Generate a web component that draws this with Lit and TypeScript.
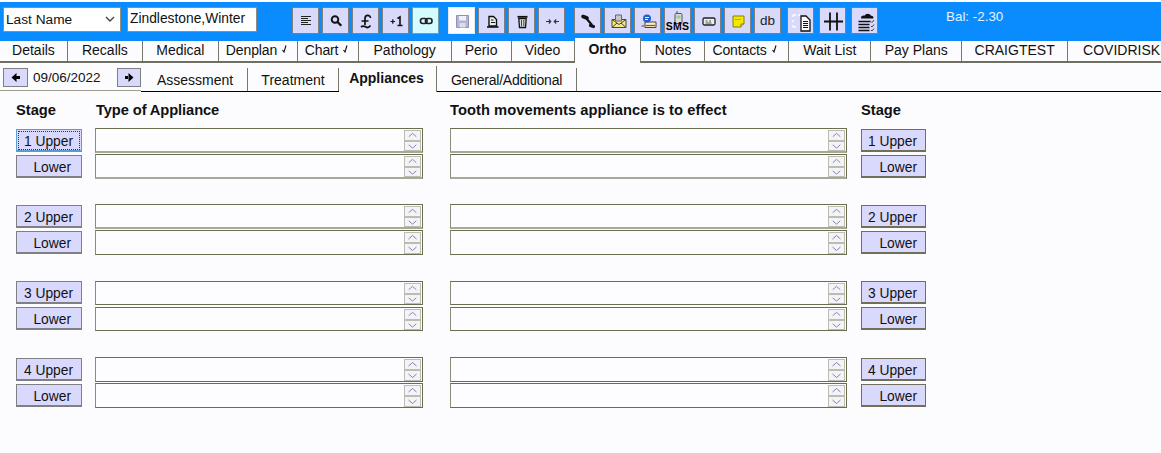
import { LitElement, html, css, svg } from "lit";
import { customElement } from "lit/decorators.js";

const K = "#111";
const icons: Record<string, unknown> = {
  lines: svg`<path d="M8 8.500h10M8 10.500h7M8 12.500h10M8 14.500h7M8 16.500h10" stroke="#222" stroke-width="1" fill="none"/>`,
  search: svg`<circle cx="12" cy="11.500" r="3.300" fill="none" stroke="${K}" stroke-width="1.900"/><path d="M14.500 14l3.800 3.800" stroke="${K}" stroke-width="2.300"/>`,
  pound: svg`<path d="M17.500 10c0-3.500-5.500-3.500-5.500.5v6.500M8.500 13h7M8 19c2-1.800 3.500-1 5 0s3 .5 4.500-1.500" fill="none" stroke="${K}" stroke-width="1.700"/>`,
  plus1: svg`<path d="M7.500 13.500h4.500M9.800 11.300v4.500" stroke="${K}" stroke-width="1.200"/><path d="M14.500 10.500l2.500-1.500v8.500M14.500 17.500h5" fill="none" stroke="${K}" stroke-width="1.600"/>`,
  link: svg`<rect x="7.500" y="10.500" width="6.500" height="5" rx="2.200" fill="none" stroke="#222" stroke-width="1.700"/><rect x="12.500" y="10.500" width="6.500" height="5" rx="2.200" fill="none" stroke="#222" stroke-width="1.700"/>`,
  save: svg`<path d="M7.500 7.500h12v12h-12z" fill="#b4b4d4" stroke="#9090b0"/><rect x="10" y="8" width="7" height="4.500" fill="#f0f0f8"/><rect x="10.500" y="15" width="6" height="4.500" fill="#dcdcec"/>`,
  doc: svg`<path d="M10 8.500h4.500l3 3v6.500h-7.500z" fill="#eee" stroke="${K}" stroke-width="1.400"/><path d="M8 19h11.500" stroke="${K}" stroke-width="1.600"/><path d="M12 12h2.500M12 14.500h4" stroke="${K}"/>`,
  bin: svg`<path d="M9.800 10.500l.7 9h6l.7-9z" fill="#ddd" stroke="${K}" stroke-width="1.300"/><path d="M8.500 8.800h10" stroke="${K}" stroke-width="1.800"/><path d="M12.500 12v6M14.800 12v6" stroke="#444"/>`,
  merge: svg`<path d="M7 13.500h4.500M9.800 11.500l2 2-2 2M20 13.500h-4.500M17.200 11.500l-2 2 2 2" fill="none" stroke="#333" stroke-width="1.100"/>`,
  phone: svg`<path d="M8 8.500l4 1.500" stroke="${K}" stroke-width="3.600" stroke-linecap="round"/><path d="M11 10l6 7" stroke="${K}" stroke-width="2.200"/><path d="M15.500 17.500l3 1" stroke="${K}" stroke-width="3.200" stroke-linecap="round"/>`,
  mail: svg`<path d="M7 11.500h14v8h-14z" fill="#f4ea80" stroke="#444"/><path d="M7 11.500l7 5 7-5M7 19.500l5-4.500M21 19.500l-5-4.500" fill="none" stroke="#444"/><path d="M10.500 7h6v6h-6z" fill="#c8c8c8" stroke="#666"/>`,
  email: svg`<path d="M10 14h11v5.500h-11z" fill="#f4f0c0" stroke="#444"/><path d="M11 17.500h9" stroke="#c33" stroke-width="1.200"/><circle cx="12" cy="10.500" r="4" fill="#1f5fd0"/><path d="M10 9.500h4M10 11.500h3" stroke="#cfe"/><path d="M6.500 18h3" stroke="#444"/>`,
  sms: svg`<rect x="10" y="5.500" width="7" height="10" rx="1" fill="#ddd" stroke="#555"/><rect x="11.500" y="7.500" width="4" height="3" fill="#9c9"/><path d="M12 3v2.500" stroke="#555"/>`,
  card: svg`<rect x="8" y="10" width="12" height="7" rx="1.500" fill="#eee" stroke="#222" stroke-width="1.300"/><path d="M10.500 13h2M14 13h2M10.500 15h6" stroke="#444" stroke-width=".9"/>`,
  note: svg`<path d="M8 8h11v8l-3 3h-8z" fill="#f2e800" stroke="#8a8000"/><path d="M16 19v-3h3" fill="#d8d8a0" stroke="#8a8000"/><path d="M10 11.500h6" stroke="#b8a800"/>`,
  notes: svg`<path d="M5 7h3M5 7v2M10 7h2M5 12v2M5 17v2M5 19h3" stroke="#fff" stroke-width="1.300" fill="none"/><path d="M13 8h5l4 4v11h-9z" fill="#fff" stroke="${K}" stroke-width="1.300"/><path d="M15 13.500h5M15 15.500h5M15 17.500h5M15 19.500h5" stroke="${K}"/>`,
  hash: svg`<path d="M4 13.500h19M10 4.500v18M17 4.500v18" stroke="${K}" stroke-width="1.800" fill="none"/>`,
  cloud: svg`<path d="M9 10c0-2.500 2.500-2.800 3.500-2.300 1-2.700 5.500-2.700 6.500 0 2.500 0 3 2.300 2 2.800h-12z" fill="${K}"/><path d="M6.500 13.500h12M6.500 16.500h11M6.500 19.500h11M6.500 22.500h11" stroke="${K}" stroke-width="1.400"/><path d="M19 13.500l1 1 2-2.500M19 18l1 1 2-2.500M19 22l1 1 2-2.500" stroke="#333" fill="none" stroke-width=".9"/>`,
};

const tools = [
  [["lines"], ["search"], ["pound"], ["plus1"], ["link", "cyan"]],
  [["save", "white"], ["doc"], ["bin"], ["merge"]],
  [["phone"], ["mail"], ["email"], ["sms"], ["card"], ["note"], ["db"]],
  [["notes"], ["hash"], ["cloud"]],
];

const tabs: [string, number, boolean?][] = [
  ["Details", 68], ["Recalls", 75], ["Medical", 76], ["Denplan", 79, true], ["Chart", 61, true],
  ["Pathology", 93], ["Perio", 60], ["Video", 63], ["Ortho", 67], ["Notes", 64],
  ["Contacts", 84, true], ["Wait List", 82], ["Pay Plans", 91], ["CRAIGTEST", 106], ["COVIDRISK", 93],
];
const subtabs: [string, number][] = [["Assessment", 107], ["Treatment", 91], ["Appliances", 98], ["General/Additional", 140]];

@customElement("app-root")
export class AppRoot extends LitElement {
  static styles = css`
    :host { display: block; width: 1161px; height: 453px; overflow: hidden; background: #fcfcff; font: 14px "Liberation Sans", Arial, sans-serif; color: #111; }
    .wrap { background: #fff; height: 2px; }
    .top { height: 39px; background: #0a8cff; display: flex; align-items: flex-start; padding: 5px 0 0 3px; box-sizing: border-box; position: relative; }
    .select { width: 118px; height: 25px; box-sizing: border-box; background: #fff; border: 1px solid #8f8f7f; display: flex; align-items: center; justify-content: space-between; padding: 0 5px 0 2px; font-size: 13.700px; }
    .name { width: 130px; height: 25px; box-sizing: border-box; background: #fff; border: 1px solid #8f8f7f; margin-left: 6px; padding: 0 2px 3px 2px; display: flex; align-items: center; font-size: 13.800px; }
    .groups { display: flex; margin-left: 35px; }
    .group { display: flex; gap: 3px; }
    .group + .group { margin-left: 9px; }
    .group:nth-child(4) { margin-left: 6px; gap: 5px; }
    .tool { width: 27px; height: 27px; box-sizing: border-box; background: #d9d9fb; border: 1px solid #7f7f7f; display: flex; align-items: center; justify-content: center; position: relative; color: #222; }
    .tool.cyan { background: #d4fbff; border-color: #6f9fa8; }
    .tool.white { background: #fcfcff; border-color: #e8e8e8; }
    .tool svg { position: absolute; left: 0; top: 0; width: 27px; height: 27px; }
    .dbl { font-size: 13.500px; }
    .smslabel { position: absolute; left: 0; right: 0; bottom: 2px; text-align: center; font: bold 10.500px "Liberation Sans", sans-serif; letter-spacing: .3px; color: #000; line-height: 10px; }
    .bal { position: absolute; left: 946px; top: 7px; color: #e4f2ff; font-size: 13.400px; }
    .tabs { display: flex; height: 20px; border-bottom: 2px solid #6f6f63; background: #fcfcff; }
    .tab { box-sizing: border-box; height: 20px; border-right: 1px solid #77776a; display: flex; align-items: center; justify-content: center; padding-bottom: 2px; white-space: nowrap; }
    .tab:last-child { border-right: 0; padding-left: 15px; justify-content: flex-start; }
    .tab.chk { justify-content: flex-start; padding-left: 7px; letter-spacing: -.12px; }
    .tab .c { width: 8px; height: 8px; margin-left: 4px; margin-bottom: 2px; }
    .tab.on { font-weight: bold; height: 25px; margin-top: -3px; background: #fcfcff; position: relative; padding-bottom: 3px; }
    .sub { display: flex; height: 29px; align-items: flex-start; }
    .nav { width: 141px; height: 28px; box-sizing: border-box; display: flex; align-items: center; padding: 5px 0 4px 3px; border-bottom: 1px solid #9c9c90; }
    .arrow { width: 25px; height: 19px; box-sizing: border-box; background: #d9d9fb; border: 1px solid #7f7f7f; display: flex; align-items: center; justify-content: center; }
    .arrow.next { width: 24px; }
    .arrow svg { width: 11px; height: 11px; }
    .date { width: 89px; padding-left: 5px; box-sizing: border-box; font-size: 13.500px; }
    .stabs { display: flex; flex: 1; height: 29px; border-bottom: 1px solid #000; box-sizing: border-box; }
    .st { box-sizing: border-box; height: 23px; margin-top: 5px; display: flex; align-items: center; justify-content: center; border-right: 1px solid #77776a; }
    .st:first-child { padding-left: 2px; }
    .st.tight { letter-spacing: -.22px; }
    .st.on { font-weight: bold; height: 26px; margin-top: 3px; background: #fcfcff; padding: 0 2px 3px 0; position: relative; z-index: 1; }
    .form { padding: 9px 0 0 16px; }
    .heads { display: grid; grid-template-columns: 80px 354px 411px 65px; height: 18px; align-items: center; font-weight: bold; font-size: 14.700px; margin-bottom: 9px; }
    .heads .type { letter-spacing: -.1px; }
    .heads .move { letter-spacing: .05px; }
    .row { display: grid; grid-template-columns: 79px 355px 411px 65px; height: 26px; align-items: start; }
    .row.gap { margin-top: 24px; }
    .row.gap.n0 { margin-top: 0; }
    .row.gap.n3 { margin-top: 25px; }
    .btn { width: 66px; height: 23px; margin-top: 1px; box-sizing: border-box; background: #d9d9fd; border: 1px solid #7f7f84; border-bottom-width: 2px; text-align: right; padding: 0 8px 0 0; line-height: 23px; font-size: 13.800px; }
    .btn.low { padding-right: 10px; }
    .btn.r { width: 65px; border-color: #6f6f5c; padding-right: 8px; }
    .btn.focus { border-color: #5b9bd5; outline: 1px dotted #333; outline-offset: -3px; }
    .memo { height: 25px; box-sizing: border-box; border: 1px solid #6c6c50; border-left-color: #8c8c78; background: #fdfdff; display: flex; justify-content: flex-end; padding: 1px 1px 0 0; }
    .n0 .memo, .n1.gap .memo { border-bottom: 2px solid #a8a898; }
    .n2 .memo { margin-top: 1px; height: 24px; }
    .memo.a { width: 328px; }
    .memo.b { width: 397px; }
    .spin { width: 17px; display: flex; flex-direction: column; }
    .spin svg { display: block; width: 17px; height: 11px; box-sizing: border-box; border: 1px solid #bcbcb0; background: #f4f4f8; }
  `;

  tool(t: string[]) {
    const [name, cls] = t;
    const body = name === "db"
      ? html`<span class="dbl">db</span>`
      : html`<svg viewBox="0 0 27 27">${icons[name]}</svg>${name === "sms" ? html`<span class="smslabel">SMS</span>` : ""}`;
    return html`<div class="tool ${cls ?? ""}">${body}</div>`;
  }

  row(label: string, n: number, first: boolean) {
    const spin = html`<div class="spin">
      <svg viewBox="0 0 15 9"><path d="M3.500 6l4-3.500 4 3.500" fill="none" stroke="#8080a8"/></svg>
      <svg viewBox="0 0 15 9"><path d="M3.500 3l4 3.500 4-3.500" fill="none" stroke="#8080a8"/></svg>
    </div>`;
    return html`<div class="row ${first ? "gap" : ""} n${n}">
      <div class="btn ${first ? "" : "low"} ${first && n === 0 ? "focus" : ""}">${label}</div>
      <div class="memo a">${spin}</div>
      <div class="memo b">${spin}</div>
      <div class="btn r">${label}</div>
    </div>`;
  }

  render() {
    return html`
      <div class="wrap"></div>
      <div class="top">
        <div class="select">Last Name
          <svg width="10" height="7" viewBox="0 0 10 7"><path d="M1 1l4 4 4-4" fill="none" stroke="#444" stroke-width="1.400"/></svg>
        </div>
        <div class="name">Zindlestone,Winter</div>
        <div class="groups">
          ${tools.map((g) => html`<div class="group">${g.map((t) => this.tool(t))}</div>`)}
        </div>
        <div class="bal">Bal: -2.30</div>
      </div>
      <div class="tabs">
        ${tabs.map(([t, w, c], i) => html`<div class="tab ${c ? "chk" : ""} ${i === 8 ? "on" : ""}" style="width:${w}px">${t}${c ? html`<svg class="c" viewBox="0 0 8 8"><path d="M1.500 5l1.500 2 2-6.500" fill="none" stroke="#111" stroke-width="1.100"/></svg>` : ""}</div>`)}
      </div>
      <div class="sub">
        <div class="nav">
          <div class="arrow"><svg viewBox="0 0 11 11"><path d="M6.500 1v9L1.500 5.500zM6 4h4v3H6z" fill="#000"/></svg></div>
          <div class="date">09/06/2022</div>
          <div class="arrow next"><svg viewBox="0 0 11 11"><path d="M4.500 1v9l5-4.500zM1 4h4v3H1z" fill="#000"/></svg></div>
        </div>
        <div class="stabs">
          ${subtabs.map(([t, w], i) => html`<div class="st ${i === 2 ? "on" : ""} ${i === 3 ? "tight" : ""}" style="width:${w}px">${t}</div>`)}
        </div>
      </div>
      <div class="form">
        <div class="heads"><span>Stage</span><span class="type">Type of Appliance</span><span class="move">Tooth movements appliance is to effect</span><span>Stage</span></div>
        ${[0, 1, 2, 3].map((n) => html`${this.row(`${n + 1} Upper`, n, true)}${this.row("Lower", n, false)}`)}
      </div>
    `;
  }
}
